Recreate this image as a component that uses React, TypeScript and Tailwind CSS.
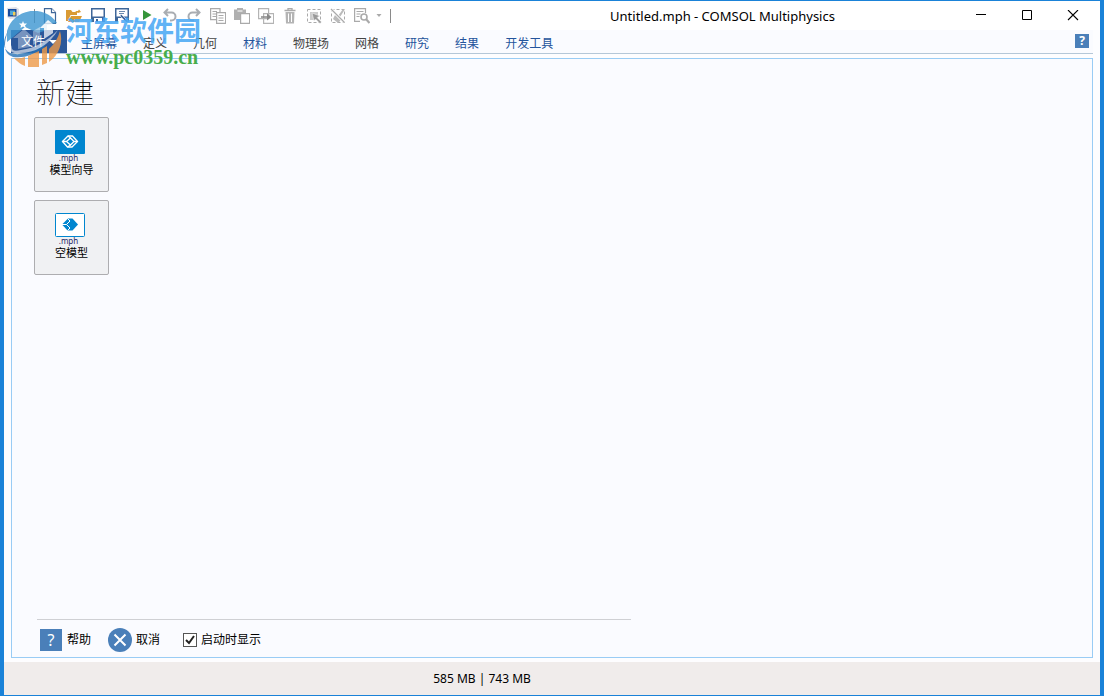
import type { ReactNode } from "react";

const tabs = [
  { label: "主屏幕", accent: true },
  { label: "定义", accent: false },
  { label: "几何", accent: false },
  { label: "材料", accent: true },
  { label: "物理场", accent: false },
  { label: "网格", accent: false },
  { label: "研究", accent: true },
  { label: "结果", accent: true },
  { label: "开发工具", accent: true },
];

const tools: { label: string; icon: ReactNode }[] = [
  {
    label: "新建",
    icon: (
      <g fill="#fff" stroke="#3f6799" strokeWidth="1.2">
        <path d="M2.5 .6h7l4 4v10.8h-11z" />
        <path d="M9.5 .6v4h4" />
      </g>
    ),
  },
  {
    label: "打开",
    icon: (
      <g fill="#d99a34">
        <path d="M0 2h5l1.500 2H11v3H4.500L2 13H0z" />
        <path d="M5 8h11l-3 6H2z" />
        <path d="M9 3h3l1-1.500L15 4l-3 1z" />
      </g>
    ),
  },
  {
    label: "保存",
    icon: (
      <g fill="#3f6799">
        <path d="M1 0h14v14H1zM2.500 1.500v7h11v-7zM4 10v4h8v-4z" fillRule="evenodd" />
        <path d="M6 11h2v3H6z" />
      </g>
    ),
  },
  {
    label: "另存为",
    icon: (
      <>
        <path
          d="M1 0h14v14H1zM2.500 1.500v7h11v-7zM4 10v4h8v-4z"
          fill="#3f6799"
          fillRule="evenodd"
        />
        <path d="M5 3.500h6M5 5.500h5" stroke="#6c8bb0" />
        <path d="M7 6l6 6 2 3-3-1-6-6z" fill="#3f6799" stroke="#fff" strokeWidth=".6" />
      </>
    ),
  },
  { label: "运行", icon: <path d="M5 2l8.500 5L5 12z" fill="#35953a" /> },
  {
    label: "撤消",
    icon: (
      <path
        d="M6 1L2.500 4.500 6 8M3 4.500h6.500a4 4 0 0 1 0 8H8"
        fill="none"
        stroke="#a9adb2"
        strokeWidth="2"
      />
    ),
  },
  {
    label: "重做",
    icon: (
      <path
        d="M10 1l3.500 3.500L10 8M13 4.500H6.500a4 4 0 0 0 0 8H8"
        fill="none"
        stroke="#a9adb2"
        strokeWidth="2"
      />
    ),
  },
  {
    label: "复制",
    icon: (
      <g fill="#fff" stroke="#aaa" strokeWidth="1.200">
        <path d="M.6 .6h9.400v11H.6zM2.500 3.500H7M2.500 6H7M2.500 8.500H7" />
        <path d="M6.600 4.600h9v10.800h-9zM8.500 7.500h5M8.500 10h5M8.500 12.500h5" />
      </g>
    ),
  },
  {
    label: "粘贴",
    icon: (
      <>
        <path d="M0 1.500h3V0h6v1.500h3V5H6v7H0z" fill="#b0b0b0" />
        <path d="M3.500 3h5" stroke="#fff" />
        <path d="M6.600 5.600h9v9.800h-9z" fill="#fff" stroke="#aaa" strokeWidth="1.200" />
      </>
    ),
  },
  {
    label: "重复",
    icon: (
      <>
        <path d="M.6 .6h10v10H.6zM5.600 5.600h10v9.800h-10z" fill="#fff" stroke="#b4b4b4" strokeWidth="1.200" />
        <path d="M3 8.200h6V5.500l4.500 3.500L9 12.500V9.800H3z" fill="#888" />
      </>
    ),
  },
  {
    label: "删除",
    icon: (
      <>
        <path d="M2.500 2.500h11M6 2.500V.6h4v1.900" fill="none" stroke="#aaa" strokeWidth="1.300" />
        <path d="M3.500 4h9l-.5 11.500H4z" fill="#b4b4b4" />
        <path d="M6.500 5.500V14M9.500 5.500V14" stroke="#fff" />
      </>
    ),
  },
  {
    label: "选择",
    icon: (
      <>
        <path d="M1.500 1.500h13v13h-13z" fill="none" stroke="#aaa" strokeDasharray="3 2" />
        <path d="M4 4h8v8H4z" fill="#ccc" />
        <path d="M6 5l8 3-3 1.500 4.500 4.500-1.500 1.500-4.500-4.500L8 13z" fill="#999" stroke="#fff" strokeWidth=".5" />
      </>
    ),
  },
  {
    label: "取消选择",
    icon: (
      <>
        <path d="M1.500 1.500h13v13h-13z" fill="none" stroke="#aaa" strokeDasharray="3 2" />
        <path d="M5 7l3 1 5-7 1.500 1L10 9l1 3-3 3-5-4z" fill="#bbb" />
        <path d="M1 1l13 13" stroke="#fff" strokeWidth="3" />
        <path d="M1 1l13 13" stroke="#aaa" strokeWidth="1.300" />
      </>
    ),
  },
  {
    label: "查找",
    icon: (
      <g fill="none" stroke="#aaa" strokeWidth="1.200">
        <path d="M11.500 5V.6H.6v12.800H6M2.500 3.500h7M2.500 6h4M2.500 8.500h3" />
        <circle cx="10" cy="9" r="3" strokeWidth="1.600" />
        <path d="M12 11l3.500 4" strokeWidth="2.200" />
      </g>
    ),
  },
];

function Divider() {
  return <span className="h-3.5 w-px bg-[#8a8a8a]" />;
}

function TitleBar() {
  return (
    <header className="flex h-[29px] items-center bg-white">
      <svg className="mx-[3px] mb-1.5 size-3 shrink-0" viewBox="0 0 12 12" aria-hidden="true">
        <path d="M0 1l9-1 3 2v9l-9 1-3-2z" fill="#dfe0e6" />
        <path d="M1 2h8.500v7.500H1z" fill="#184b9d" />
        <path d="M3 3.500h5v4.500H3z" fill="#4ca6d8" />
        <path d="M6 5h2.500v3.500H6z" fill="#f1cd55" />
      </svg>
      <div className="ml-3 flex items-center">
        <Divider />
        <div className="ml-[7px] flex gap-2">
          {tools.map((tool) => (
            <button key={tool.label} type="button" aria-label={tool.label} className="size-4">
              <svg className="size-4" viewBox="0 0 16 16">
                {tool.icon}
              </svg>
            </button>
          ))}
        </div>
        <button type="button" aria-label="自定义" className="ml-1.5 mr-2 flex w-1.5">
          <svg className="h-1 w-1.5" viewBox="0 0 6 4">
            <path d="M.5 0h5L3 3z" fill="#aaa" />
          </svg>
        </button>
        <Divider />
      </div>
      <h1 className="flex-1 pl-24 text-center text-[13px] leading-5 whitespace-nowrap text-black">
        Untitled.mph - COMSOL Multiphysics
      </h1>
      <div className="mr-1 flex">
        <button type="button" aria-label="最小化" className="flex h-[27px] w-[46px] items-center justify-center">
          <svg className="size-3" viewBox="0 0 12 12">
            <path d="M1 4.500h10" stroke="#000" />
          </svg>
        </button>
        <button type="button" aria-label="最大化" className="flex h-[27px] w-[46px] items-center justify-center">
          <svg className="size-3" viewBox="0 0 12 12">
            <path d="M1.500 .5h9v9h-9z" fill="none" stroke="#000" />
          </svg>
        </button>
        <button type="button" aria-label="关闭" className="flex h-[27px] w-[46px] items-center justify-center">
          <svg className="size-3" viewBox="0 0 12 12">
            <path d="M1 0l10 10M11 0L1 10" stroke="#000" strokeWidth="1.100" />
          </svg>
        </button>
      </div>
    </header>
  );
}

function Ribbon() {
  return (
    <nav className="mx-[7px] flex h-6 items-stretch border-b border-[#b5c7d8] bg-[#fafbff] text-xs">
      <button type="button" className="flex w-14 items-center justify-center gap-1 bg-[#2b579a] text-white">
        文件
        <svg className="h-1 w-2" viewBox="0 0 8 4" aria-hidden="true">
          <path d="M0 0h8L4 4z" fill="#fff" />
        </svg>
      </button>
      <div className="ml-px flex">
        {tabs.map((tab) => (
          <button
            key={tab.label}
            type="button"
            className={`px-[13px] pt-1 leading-5 whitespace-nowrap ${tab.accent ? "text-[#24549c]" : "text-[#444]"}`}
          >
            {tab.label}
          </button>
        ))}
      </div>
      <button
        type="button"
        aria-label="帮助"
        className="ml-auto mr-1 mt-1 flex size-3.5 items-center justify-center bg-[#4a7fb9] text-xs font-bold text-white"
      >
        ?
      </button>
    </nav>
  );
}

function WizardIcon() {
  return (
    <svg className="h-6 w-[30px]" viewBox="0 0 30 24" aria-hidden="true">
      <rect width="30" height="24" rx="1" fill="#0086cf" />
      <g fill="none" stroke="#fff" strokeWidth="1.300">
        <path d="M7.500 11.500L13 6h4.500l5 5.500L17 17h-4.500z" />
        <path d="M11.500 11.500l4-3.500 3.500 3.500-3.500 3.500zM13 6l2.500 2M12.500 17l3-2M7.500 11.500h4M19 11.500h3.500" />
      </g>
    </svg>
  );
}

function BlankIcon() {
  return (
    <svg className="h-6 w-[30px]" viewBox="0 0 30 24" aria-hidden="true">
      <rect x=".5" y=".5" width="29" height="23" rx="1" fill="#fff" stroke="#0086cf" />
      <path d="M7 11.500L13 5.500h4.500l5.500 6-5.500 6h-5z" fill="#0086cf" />
      <path d="M7 11.500h4.500L15 8l-2.500-2.500M11.500 11.500l3.500 3.500-2.500 2.500" fill="none" stroke="#fff" />
    </svg>
  );
}

function ModelButton({ icon, label }: { icon: ReactNode; label: string }) {
  return (
    <button
      type="button"
      className="flex size-[75px] flex-col items-center rounded-xs border border-[#adadb0] bg-[#f0f1f3] pt-3"
    >
      <span className="flex flex-col items-center pr-1">
        {icon}
        <span className="pr-0.5 text-[8px] leading-2 text-[#1f2a66]">.mph</span>
      </span>
      <span className="text-[11px] leading-4 text-black">{label}</span>
    </button>
  );
}

function Watermark() {
  return (
    <div className="pointer-events-none absolute left-0 top-2.5 flex whitespace-nowrap">
      <svg className="h-14 w-[60px]" viewBox="0 0 60 56" aria-hidden="true">
        <g opacity=".8">
          <path d="M3 20A28 28 0 0 1 53 12L43 14V19L34 22 21 16 8 27 3 31z" fill="#3c96d1" />
          <path d="M4 20Q-5 36 6 42 22 47 42 30L40 37Q25 48 9 46-4 42 4 20z" fill="#2572b6" />
          <path d="M56 20A28 28 0 0 1 45 51V38Q53 31 56 20z" fill="#ee9a48" />
          <path d="M10 47q6 1 11-1v9Q14 52 10 47zM24 45l11-5v16H24zM38 38l5-3v17l-5 2z" fill="#ee9a48" />
          <path d="M14 38V27H9l11-9 10 9h-4v9zM29 34V20l7-4v14z" fill="#fff" opacity=".45" />
          <path d="M40 28V17h-4l8-8 10 8h-5v5z" fill="#fff" opacity=".9" />
          <path d="M8 34Q6 42 17 39 38 36 54 19 40 42 15 42 3 43 8 34z" fill="#fff" opacity=".75" />
          <path d="M19 10l1 2.500h3l-2 2 1 2.500-3-1.500-2.500 1.500.5-2.500-2-2h3z" fill="#fff" />
        </g>
      </svg>
      <div className="ml-0.5 flex flex-col pt-1">
        <span className="text-[27px] leading-8 font-bold text-[#4ba9f4]/90">河东软件园</span>
        <span className="font-['Liberation_Serif',serif] text-xl leading-5 font-bold text-[#48ad4c]">
          www.pc0359.cn
        </span>
      </div>
    </div>
  );
}

export default function App() {
  return (
    <div className="relative flex min-h-screen flex-col border-x-4 border-y border-[#1a82d8] bg-[#fdfdff] font-['Noto_Sans','Noto_Sans_CJK_SC',sans-serif]">
      <TitleBar />
      <Ribbon />

      <main className="mx-[7px] mb-1 mt-1 flex flex-1 flex-col border border-[#99ccf5] bg-[#fafbff]">
        <div className="flex flex-col items-start gap-2 pl-[22px]">
          <h2 className="pl-0.5 pt-3.5 font-['Noto_Sans_CJK_SC',sans-serif] text-[29px] leading-9 font-thin text-black">
            新建
          </h2>
          <ModelButton icon={<WizardIcon />} label="模型向导" />
          <ModelButton icon={<BlankIcon />} label="空模型" />
        </div>

        <footer className="mt-auto ml-[25px] flex h-[38px] w-[55%] items-center border-t border-[#cfd0d4] pt-0.5 pl-[3px] text-xs text-black">
          <button type="button" className="flex items-center gap-[5px]">
            <span className="flex size-[22px] items-center justify-center bg-[#4a7fb9] text-base text-white">?</span>
            帮助
          </button>
          <button type="button" className="ml-[17px] flex items-center gap-1">
            <svg className="size-6" viewBox="0 0 24 24" aria-hidden="true">
              <circle cx="12" cy="12" r="12" fill="#4a7fb9" />
              <path d="M6.500 6.500l11 11M17.500 6.500l-11 11" stroke="#fff" strokeWidth="2" />
            </svg>
            取消
          </button>
          <label className="ml-[23px] flex items-center gap-1">
            <span className="grid">
              <input
                type="checkbox"
                defaultChecked
                className="peer col-start-1 row-start-1 size-3.5 appearance-none border border-[#555] bg-white"
              />
              <svg
                className="pointer-events-none invisible col-start-1 row-start-1 size-3.5 peer-checked:visible"
                viewBox="0 0 14 14"
                aria-hidden="true"
              >
                <path d="M3 7l3 3 5-7" fill="none" stroke="#222" strokeWidth="2" />
              </svg>
            </span>
            启动时显示
          </label>
        </footer>
      </main>

      <div className="flex h-[33px] items-center justify-center bg-[#f0eceb] pr-[140px] text-xs text-black">
        585 MB | 743 MB
      </div>

      <Watermark />
    </div>
  );
}
